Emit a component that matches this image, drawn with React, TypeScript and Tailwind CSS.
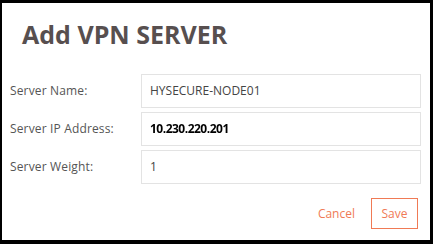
export default function App() {
    const rows = [
        { label: "Server Name:", value: "HYSECURE-NODE01" },
        { label: "Server IP Address:", value: "10.230.220.201", masked: true },
        { label: "Server Weight:", value: "1" },
    ];

    return (
        <div className="w-[433px] h-[244px] bg-black pt-[3px] pl-[2px] pr-[3px] pb-[4px] font-['Open_Sans',sans-serif]">
            <div className="w-full h-full bg-white flex flex-col">

                <h1 className="pl-[20px] pt-[15px] text-[25px] leading-[32px] font-bold text-[#574f4f]">
                    Add VPN SERVER
                </h1>

                <div className="mt-[24px] flex flex-col gap-[4px]">
                    {rows.map((row) => (
                        <div key={row.label} className="flex items-center">
                            <label className="w-[139px] pl-[8px] text-[12px] tracking-[0.15px] text-[#555]">
                                {row.label}
                            </label>
                            <div className="w-[280px] h-[34px] border border-[#e3e3e3] flex items-center pl-[8px] text-[12px] text-[#444]">
                                {row.masked ? (
                                    <span className="font-bold text-black tracking-[-0.5px] blur-[0.4px]">
                                        {row.value}
                                    </span>
                                ) : (
                                    row.value
                                )}
                            </div>
                        </div>
                    ))}
                </div>

                <div className="mt-[14px] pr-[12px] flex justify-end items-center gap-[14px]">
                    <button className="text-[12px] text-[#f07a55] px-[2px]">
                        Cancel
                    </button>
                    <button className="w-[47px] h-[31px] border border-[#f07a55] text-[12px] text-[#f07a55]">
                        Save
                    </button>
                </div>

            </div>
        </div>
    );
}
